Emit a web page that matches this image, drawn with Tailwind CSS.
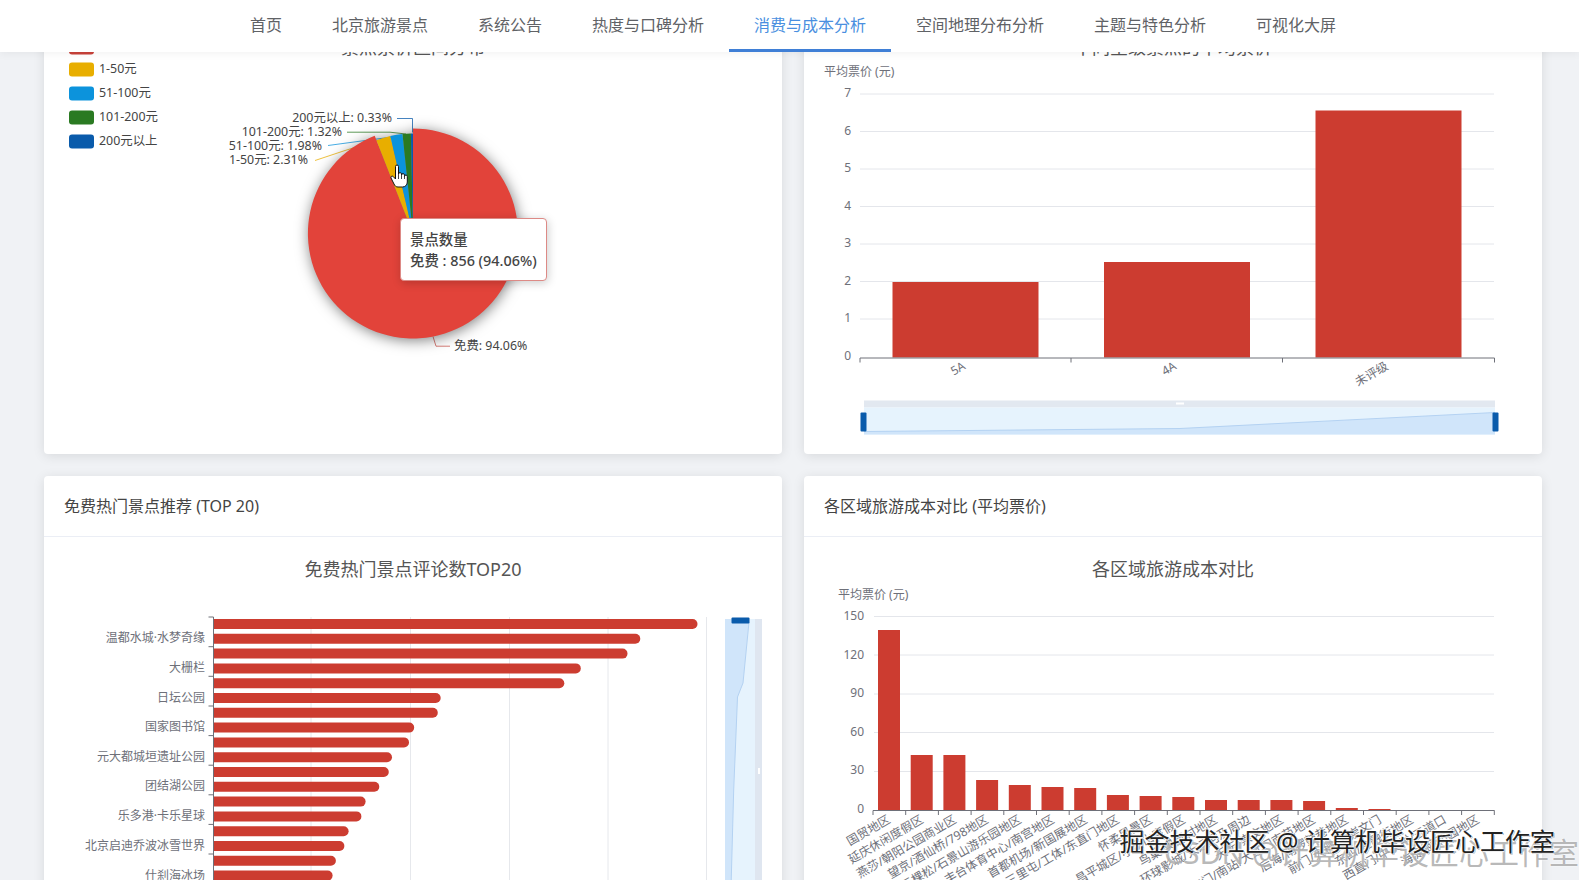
<!DOCTYPE html>
<html lang="zh-CN">
<head>
    <meta charset="UTF-8">
    <title>消费与成本分析</title>
    <script src="https://cdn.jsdelivr.net/npm/@tailwindcss/browser@4"></script>
</head>
<body class="relative h-[880px] overflow-hidden bg-[#f0f2f5] font-['Noto_Sans','Noto_Sans_CJK_SC',sans-serif] text-[#444]">

    <!-- Top nav -->
    <nav class="absolute inset-x-0 top-0 z-20 flex h-[52px] bg-white pl-[225px] text-[16px] leading-[50px] text-[#606266] shadow-[0_2px_8px_rgba(0,0,0,0.05)]">
        <a class="px-[25px]">首页</a>
        <a class="px-[25px]">北京旅游景点</a>
        <a class="px-[25px]">系统公告</a>
        <a class="px-[25px]">热度与口碑分析</a>
        <a class="border-b-[3px] border-[#3f7fd6] px-[25px] text-[#4a8fe0]">消费与成本分析</a>
        <a class="px-[25px]">空间地理分布分析</a>
        <a class="px-[25px]">主题与特色分析</a>
        <a class="px-[25px]">可视化大屏</a>
    </nav>

    <!-- Cards, page is scrolled down a bit -->
    <main class="-mt-[47px] grid grid-cols-2 gap-[22px] pl-[44px] pr-[37px]">

        <!-- Ticket price distribution -->
        <section class="rounded-[4px] bg-white shadow-[0_2px_12px_rgba(0,0,0,0.1)]">
            <h3 class="h-[61px] border-b border-[#ebeef5] px-[20px] text-[16px] leading-[61px]">景点票价区间分布</h3>
            <div class="relative p-[20px]">
                <svg class="block overflow-visible" width="698" height="400" viewBox="64 34.5 698 400">
                    <text x="413" y="47" text-anchor="middle" dominant-baseline="central" class="fill-[#555] text-[18px]">景点票价区间分布</text>

                    <!-- legend -->
                    <rect x="69" y="41" width="25" height="14" rx="3" fill="#c9423a"/>
                    <rect x="69" y="63" width="25" height="14" rx="3" fill="#e8ae00"/>
                    <rect x="69" y="87" width="25" height="14" rx="3" fill="#0c93dc"/>
                    <rect x="69" y="111" width="25" height="14" rx="3" fill="#2a7a22"/>
                    <rect x="69" y="135" width="25" height="14" rx="3" fill="#0a5bab"/>
                    <g dominant-baseline="central" class="fill-[#444] text-[12.4px]">
                        <text x="99" y="69">1-50元</text>
                        <text x="99" y="93">51-100元</text>
                        <text x="99" y="117">101-200元</text>
                        <text x="99" y="141">200元以上</text>
                    </g>

                    <!-- pie label lines -->
                    <g fill="none" stroke-width="1" stroke-opacity="0.75">
                        <path d="M397 119H412.5V133" stroke="#0a5bab"/>
                        <path d="M347 132.7H390L406 134.5" stroke="#2a7a22"/>
                        <path d="M328 146L360 141.7L396 137" stroke="#0c93dc"/>
                        <path d="M315 161L345 151L384 139" stroke="#e8ae00"/>
                        <path d="M433 337L436 346.7H450" stroke="#c9534b"/>
                    </g>

                    <!-- pie -->
                    <g class="drop-shadow-[1px_2px_7px_rgba(0,0,0,0.5)]">
                        <path d="M413 234V129A105 105 0 1 1 374.7 136.2Z" fill="#e2433a"/>
                        <path d="M413 234L376.5 140.9A100 100 0 0 1 390.3 136.6Z" fill="#e8ae00"/>
                        <path d="M413 234L390.3 136.6A100 100 0 0 1 402.5 134.5Z" fill="#0c93dc"/>
                        <path d="M413 234L402.5 134.5A100 100 0 0 1 410.9 134Z" fill="#2a7a22"/>
                        <path d="M413 234L410.9 134A100 100 0 0 1 413 134Z" fill="#0a5bab"/>
                    </g>

                    <g text-anchor="end" dominant-baseline="central" class="fill-[#444] text-[12.4px]">
                        <text x="392" y="118">200元以上: 0.33%</text>
                        <text x="342" y="132">101-200元: 1.32%</text>
                        <text x="322" y="146">51-100元: 1.98%</text>
                        <text x="308" y="160">1-50元: 2.31%</text>
                    </g>
                    <text x="454" y="346" dominant-baseline="central" class="fill-[#444] text-[12.4px]">免费: 94.06%</text>
                </svg>

                <!-- tooltip -->
                <div class="absolute left-[356px] top-[204px] z-10 h-[63px] w-[147px] rounded-[4px] border border-[#dd8a86] bg-white px-[9px] py-[10px] text-[14.4px] leading-[21px] text-[#444] shadow-[1px_2px_10px_rgba(0,0,0,0.2)]">
                    <div class="font-medium">景点数量</div>
                    <div class="whitespace-nowrap font-medium">免费 : 856 (94.06%)</div>
                </div>

                <!-- mouse pointer -->
                <svg class="absolute left-[346px] top-[150px] z-10" width="18" height="24" viewBox="0 0 18 24">
                    <path d="M5.5 2.5a1.5 1.5 0 0 1 3 0V10a1.5 1.5 0 0 1 3 .2V11a1.5 1.5 0 0 1 3 .3v1a1.4 1.4 0 0 1 2.8 .3V18c0 3-2 5-5 5H8c-2 0-3-1-4-3L1 14c-.7-1.3 1-2.6 2.2-1.5L5.5 15Z" fill="#fff" stroke="#111" stroke-width="1"/>
                    <path d="M8.5 10v5M11.5 11v4M14.5 12v3" fill="none" stroke="#111" stroke-width="0.8"/>
                </svg>
            </div>
        </section>

        <!-- Average price by rating -->
        <section class="rounded-[4px] bg-white shadow-[0_2px_12px_rgba(0,0,0,0.1)]">
            <h3 class="h-[61px] border-b border-[#ebeef5] px-[20px] text-[16px] leading-[61px]">不同星级景点的平均票价</h3>
            <div class="p-[20px]">
                <svg class="block overflow-visible" width="698" height="400" viewBox="824 34.5 698 400">
                    <text x="1173" y="47" text-anchor="middle" dominant-baseline="central" class="fill-[#555] text-[18px]">不同星级景点的平均票价</text>
                    <text x="824" y="72" dominant-baseline="central" class="fill-[#6e7079] text-[12px]">平均票价 (元)</text>

                    <g stroke="#e4e6eb" stroke-width="1">
                        <path d="M860 94.5H1494M860 132H1494M860 169.5H1494M860 207H1494M860 244.5H1494M860 282H1494M860 319.5H1494"/>
                    </g>
                    <g text-anchor="end" dominant-baseline="central" class="fill-[#6e7079] text-[12px]">
                        <text x="851" y="93">7</text>
                        <text x="851" y="131">6</text>
                        <text x="851" y="168">5</text>
                        <text x="851" y="206">4</text>
                        <text x="851" y="243">3</text>
                        <text x="851" y="281">2</text>
                        <text x="851" y="318">1</text>
                        <text x="851" y="356">0</text>
                    </g>

                    <rect x="892.5" y="282.5" width="146" height="75.5" fill="#cc3c30"/>
                    <rect x="1104" y="262.5" width="146" height="95.5" fill="#cc3c30"/>
                    <rect x="1315.5" y="111" width="146" height="247" fill="#cc3c30"/>

                    <path d="M860 363V358.5H1494.5V363M1071 358.5V363M1282.5 358.5V363" fill="none" stroke="#6e7079" stroke-width="1"/>
                    <g text-anchor="end" dominant-baseline="central" class="fill-[#6e7079] text-[12px]">
                        <text x="964" y="365" transform="rotate(-30 964 365)">5A</text>
                        <text x="1175" y="365" transform="rotate(-30 1175 365)">4A</text>
                        <text x="1387" y="365" transform="rotate(-30 1387 365)">未评级</text>
                    </g>

                    <!-- data zoom -->
                    <rect x="864" y="401" width="631" height="7" fill="#e2e8f0"/>
                    <rect x="1176" y="403" width="8" height="2" fill="#fff"/>
                    <rect x="864" y="408" width="631" height="27" fill="#e6f3fd"/>
                    <path d="M864 432L1180 429L1495 413V435H864Z" fill="#d0e5fa"/>
                    <path d="M864 432L1180 429L1495 413" fill="none" stroke="#b4d2f2" stroke-width="1"/>
                    <rect x="860.5" y="413" width="6" height="19" rx="1" fill="#0a5bab"/>
                    <rect x="1492.5" y="413" width="6" height="19" rx="1" fill="#0a5bab"/>
                </svg>
            </div>
        </section>

        <!-- Free spots top 20 -->
        <section class="rounded-[4px] bg-white shadow-[0_2px_12px_rgba(0,0,0,0.1)]">
            <h3 class="h-[61px] border-b border-[#ebeef5] px-[20px] text-[16px] leading-[61px]">免费热门景点推荐 (TOP 20)</h3>
            <div class="p-[20px]">
                <svg class="block overflow-visible" width="698" height="400" viewBox="64 557 698 400">
                    <text x="413" y="569" text-anchor="middle" dominant-baseline="central" class="fill-[#555] text-[18px]">免费热门景点评论数TOP20</text>

                    <path d="M311 617V900M410.5 617V900M509.5 617V900M608 617V900M706.5 617V900" fill="none" stroke="#e6e8ec" stroke-width="1"/>

                    <g fill="#cc3c30">
                        <path d="M214 619h478.5a5 5 0 0 1 0 10H214Z"/>
                        <path d="M214 633.8h421.3a5 5 0 0 1 0 10H214Z"/>
                        <path d="M214 648.6h408.5a5 5 0 0 1 0 10H214Z"/>
                        <path d="M214 663.4h361.8a5 5 0 0 1 0 10H214Z"/>
                        <path d="M214 678.2h345.3a5 5 0 0 1 0 10H214Z"/>
                        <path d="M214 693h221.7a5 5 0 0 1 0 10H214Z"/>
                        <path d="M214 707.8h218.8a5 5 0 0 1 0 10H214Z"/>
                        <path d="M214 722.6h195.2a5 5 0 0 1 0 10H214Z"/>
                        <path d="M214 737.4h190a5 5 0 0 1 0 10H214Z"/>
                        <path d="M214 752.2h173a5 5 0 0 1 0 10H214Z"/>
                        <path d="M214 767h169.8a5 5 0 0 1 0 10H214Z"/>
                        <path d="M214 781.8h160.3a5 5 0 0 1 0 10H214Z"/>
                        <path d="M214 796.6h146.6a5 5 0 0 1 0 10H214Z"/>
                        <path d="M214 811.4h142.4a5 5 0 0 1 0 10H214Z"/>
                        <path d="M214 826.2h129.6a5 5 0 0 1 0 10H214Z"/>
                        <path d="M214 841h125.4a5 5 0 0 1 0 10H214Z"/>
                        <path d="M214 855.8h116.9a5 5 0 0 1 0 10H214Z"/>
                        <path d="M214 870.6h113.6a5 5 0 0 1 0 10H214Z"/>
                    </g>

                    <path d="M213.5 617V900M208.5 617H213.5M208.5 646.7H213.5M208.5 676.3H213.5M208.5 706H213.5M208.5 735.6H213.5M208.5 765.2H213.5M208.5 794.8H213.5M208.5 824.4H213.5M208.5 854H213.5" fill="none" stroke="#6e7079" stroke-width="1"/>

                    <g text-anchor="end" dominant-baseline="central" class="fill-[#6e7079] text-[12px]">
                        <text x="205" y="637">温都水城·水梦奇缘</text>
                        <text x="205" y="667">大栅栏</text>
                        <text x="205" y="697">日坛公园</text>
                        <text x="205" y="726">国家图书馆</text>
                        <text x="205" y="756">元大都城垣遗址公园</text>
                        <text x="205" y="785">团结湖公园</text>
                        <text x="205" y="815">乐多港·卡乐星球</text>
                        <text x="205" y="845">北京启迪乔波冰雪世界</text>
                        <text x="205" y="875">什刹海冰场</text>
                    </g>

                    <!-- vertical data zoom -->
                    <rect x="725" y="619" width="30" height="270" fill="#e6f3fd"/>
                    <rect x="755" y="619" width="7" height="270" fill="#dfe6f0"/>
                    <rect x="758" y="768" width="2" height="6" fill="#fff"/>
                    <path d="M725 619H749L743 683L737.5 697L733.7 790L731 889H725Z" fill="#d0e5fa"/>
                    <path d="M749 622L743 683L737.5 697L733.7 790L731 889" fill="none" stroke="#b4d2f2" stroke-width="1"/>
                    <rect x="731.5" y="617.5" width="18" height="6" rx="1" fill="#0a5bab"/>
                </svg>
            </div>
        </section>

        <!-- Cost by district -->
        <section class="rounded-[4px] bg-white shadow-[0_2px_12px_rgba(0,0,0,0.1)]">
            <h3 class="h-[61px] border-b border-[#ebeef5] px-[20px] text-[16px] leading-[61px]">各区域旅游成本对比 (平均票价)</h3>
            <div class="p-[20px]">
                <svg class="block overflow-visible" width="698" height="400" viewBox="824 557 698 400">
                    <text x="1173" y="569" text-anchor="middle" dominant-baseline="central" class="fill-[#555] text-[18px]">各区域旅游成本对比</text>
                    <text x="838" y="594" dominant-baseline="central" class="fill-[#6e7079] text-[12px]">平均票价 (元)</text>

                    <path d="M874 616.5H1494M874 655H1494M874 694H1494M874 732.5H1494M874 771.5H1494" fill="none" stroke="#e4e6eb" stroke-width="1"/>
                    <g text-anchor="end" dominant-baseline="central" transform="translate(0 -1)" class="fill-[#6e7079] text-[12px]">
                        <text x="864" y="616">150</text>
                        <text x="864" y="655">120</text>
                        <text x="864" y="693">90</text>
                        <text x="864" y="732">60</text>
                        <text x="864" y="770">30</text>
                        <text x="864" y="809">0</text>
                    </g>

                    <g fill="#cc3c30">
                        <rect x="878" y="630" width="22" height="180"/>
                        <rect x="910.7" y="755" width="22" height="55"/>
                        <rect x="943.4" y="755" width="22" height="55"/>
                        <rect x="976.1" y="780" width="22" height="30"/>
                        <rect x="1008.8" y="785" width="22" height="25"/>
                        <rect x="1041.5" y="787" width="22" height="23"/>
                        <rect x="1074.2" y="788" width="22" height="22"/>
                        <rect x="1106.9" y="795" width="22" height="15"/>
                        <rect x="1139.6" y="796" width="22" height="14"/>
                        <rect x="1172.3" y="797" width="22" height="13"/>
                        <rect x="1205" y="800" width="22" height="10"/>
                        <rect x="1237.7" y="800" width="22" height="10"/>
                        <rect x="1270.4" y="800" width="22" height="10"/>
                        <rect x="1303.1" y="801" width="22" height="9"/>
                        <rect x="1335.8" y="808" width="22" height="2"/>
                        <rect x="1368.5" y="809" width="22" height="1"/>
                    </g>

                    <path d="M873 810.5H1494.5M873 810.5V815M905.7 810.5V815M938.4 810.5V815M971.1 810.5V815M1003.8 810.5V815M1036.5 810.5V815M1069.2 810.5V815M1101.9 810.5V815M1134.6 810.5V815M1167.3 810.5V815M1200 810.5V815M1232.7 810.5V815M1265.4 810.5V815M1298.1 810.5V815M1330.8 810.5V815M1363.5 810.5V815M1396.2 810.5V815M1428.9 810.5V815M1461.6 810.5V815M1494.3 810.5V815" fill="none" stroke="#6e7079" stroke-width="1"/>

                    <g text-anchor="end" dominant-baseline="central" transform="translate(-3 -2)" class="fill-[#6e7079] text-[12px]">
                        <text x="892" y="820" transform="rotate(-30 892 820)">国贸地区</text>
                        <text x="925" y="820" transform="rotate(-30 925 820)">延庆休闲度假区</text>
                        <text x="958" y="820" transform="rotate(-30 958 820)">燕莎/朝阳公园商业区</text>
                        <text x="990" y="820" transform="rotate(-30 990 820)">望京/酒仙桥/798地区</text>
                        <text x="1023" y="820" transform="rotate(-30 1023 820)">五棵松/石景山游乐园地区</text>
                        <text x="1056" y="820" transform="rotate(-30 1056 820)">丰台体育中心/南宫地区</text>
                        <text x="1089" y="820" transform="rotate(-30 1089 820)">首都机场/新国展地区</text>
                        <text x="1121" y="820" transform="rotate(-30 1121 820)">三里屯/工体/东直门地区</text>
                        <text x="1154" y="820" transform="rotate(-30 1154 820)">怀柔风景区</text>
                        <text x="1187" y="820" transform="rotate(-30 1187 820)">昌平城区/小汤山度假区</text>
                        <text x="1219" y="820" transform="rotate(-30 1219 820)">鸟巢/奥运村地区</text>
                        <text x="1252" y="820" transform="rotate(-30 1252 820)">环球影城/大运河及周边</text>
                        <text x="1285" y="820" transform="rotate(-30 1285 820)">天坛/崇文地区</text>
                        <text x="1317" y="820" transform="rotate(-30 1317 820)">永定门/南站/大红门南苑地区</text>
                        <text x="1350" y="820" transform="rotate(-30 1350 820)">后海/南锣鼓巷地区</text>
                        <text x="1383" y="820" transform="rotate(-30 1383 820)">前门/大栅栏/崇文门</text>
                        <text x="1415" y="820" transform="rotate(-30 1415 820)">东四/金融街地区</text>
                        <text x="1448" y="820" transform="rotate(-30 1448 820)">西直门/中关村/五道口</text>
                        <text x="1481" y="820" transform="rotate(-30 1481 820)">海淀/颐和园地区</text>
                    </g>
                </svg>
            </div>
        </section>
    </main>

    <!-- Video watermarks -->
    <div class="absolute bottom-[9px] right-0 z-30 whitespace-nowrap text-[30px] leading-[36px] text-[#8a8a8a]/60 [text-shadow:0_0_2px_rgba(255,255,255,0.9)]">CSDN @计算机毕设匠心工作室</div>
    <div class="absolute bottom-[23px] right-[24px] z-30 whitespace-nowrap text-[25px] leading-[32px] text-[#222] [text-shadow:0_0_2px_#fff,1px_1px_1px_#fff,-1px_-1px_1px_#fff,1px_1px_0_#555]">掘金技术社区 @ 计算机毕设匠心工作室</div>
</body>
</html>
